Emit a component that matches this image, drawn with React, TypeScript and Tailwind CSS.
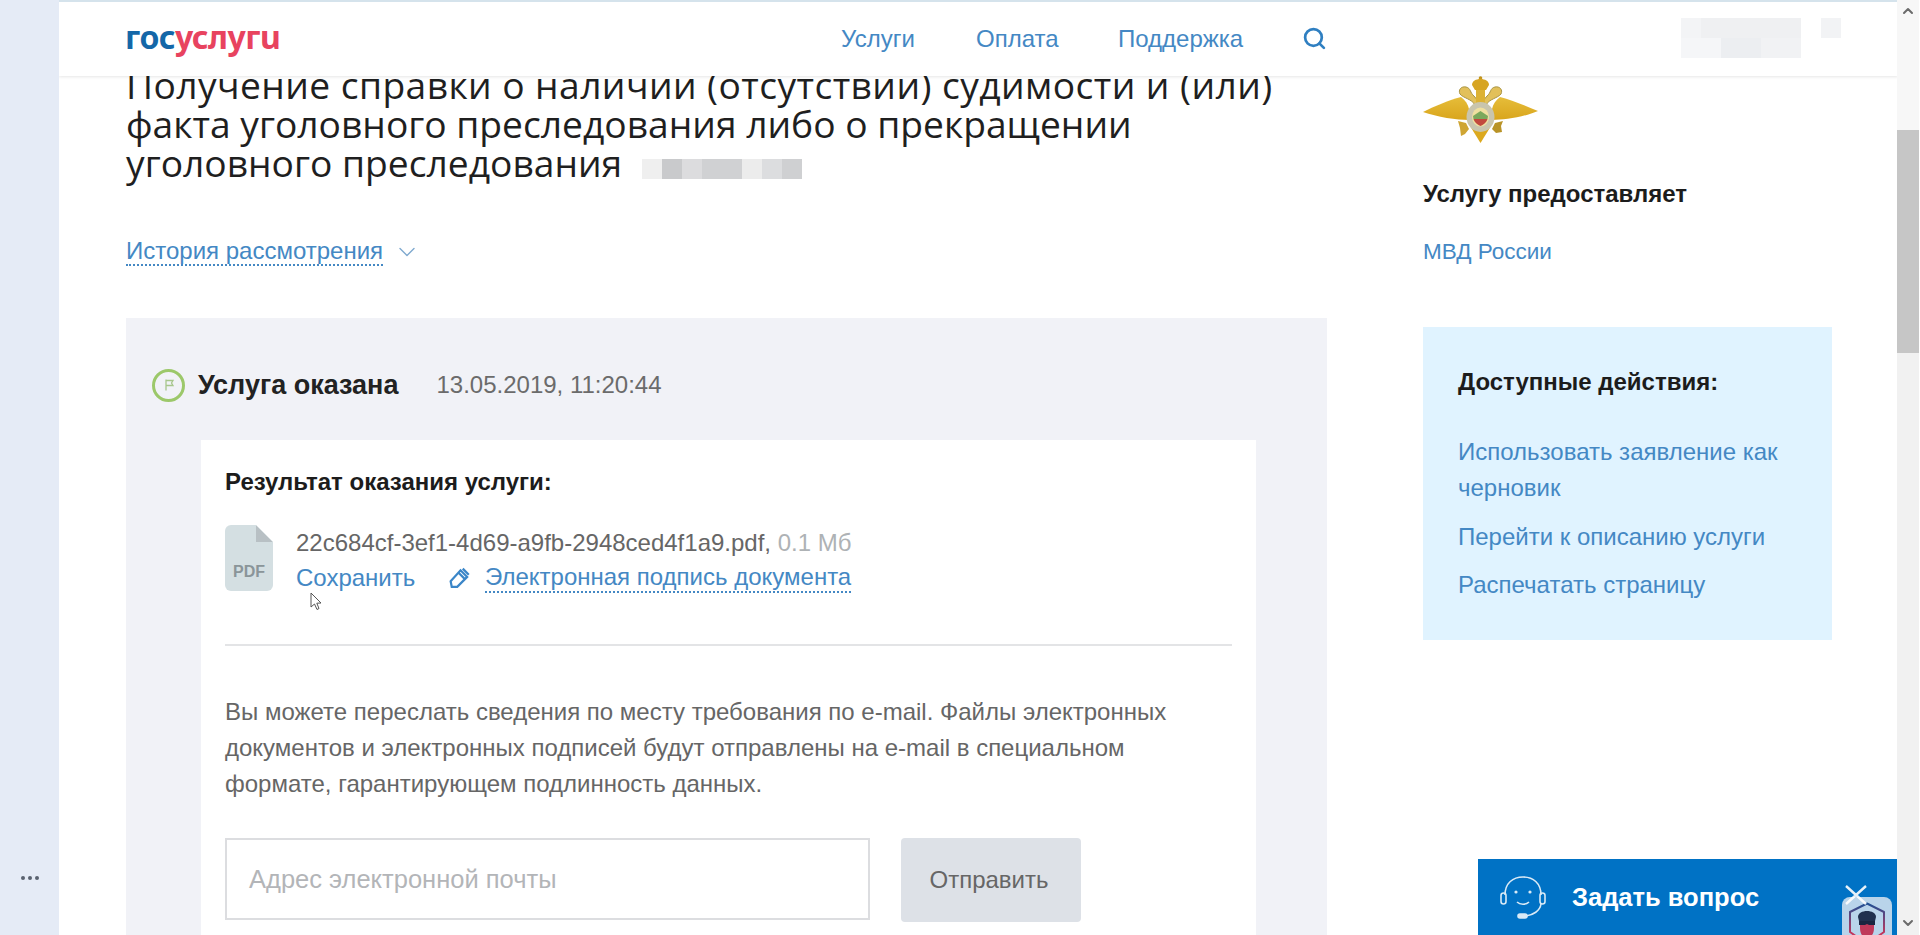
import { ChevronDown, ChevronUp, Search } from "lucide-react";

const sans = "font-['Liberation_Sans',Arial,sans-serif]";
const linkColor = "text-[#4488c4]";

const Eagle = () => (
  <svg viewBox="0 0 115 68" className="w-[115px] h-[68px]">
    <defs>
      <linearGradient id="wingFill" x1="0" y1="0" x2="0" y2="1">
        <stop offset="0" stopColor="#e6bd3a" />
        <stop offset="1" stopColor="#d9a51c" />
      </linearGradient>
    </defs>
    {/* wings */}
    <path d="M0 36 C12 30 26 24 38 21 C42 24 45 28 46 33 L46 44 C34 44 14 41 0 36Z" fill="url(#wingFill)" />
    <path d="M115 35 C103 30 89 24 77 21 C73 24 70 28 69 33 L69 44 C81 44 101 41 115 35Z" fill="url(#wingFill)" />
    {/* tail */}
    <path d="M57.5 67 L47 50 L68 50Z" fill="#dca91e" />
    {/* legs */}
    <path d="M35 45 L43 47 L46 53 L42 58 L38 60 L37 52Z" fill="#cfa533" />
    <path d="M80 45 L72 47 L69 53 L73 57 L79 56 L78 50Z" fill="#b99327" />
    {/* necks and heads */}
    <path d="M52 29 C49 23 40 22 37 18 C35 14 38 10 43 11 C48 12 47 17 51 20 L56 26Z" fill="#e2c05a" stroke="#a99546" strokeWidth="1" />
    <path d="M63 29 C66 23 75 22 78 18 C80 14 77 10 72 11 C67 12 68 17 64 20 L59 26Z" fill="#e2c05a" stroke="#a99546" strokeWidth="1" />
    {/* crown */}
    <circle cx="57.5" cy="2" r="1.8" fill="#c99a1f" />
    <path d="M49 9 C49 5 53 3 57.5 3 C62 3 66 5 66 9 L63 14 H52Z" fill="#d7a523" />
    <rect x="53" y="14" width="9" height="13" fill="#dcb235" />
    {/* shield */}
    <ellipse cx="57.5" cy="41" rx="14" ry="15" fill="#c9c5ad" />
    <ellipse cx="57.5" cy="41" rx="8.5" ry="9.5" fill="#efe0a0" />
    <path d="M50 40 L57.5 35 L65 40 L64.5 43 H50.5Z" fill="#7ba85c" />
    <path d="M50.5 43 H64.5 C63.5 46.5 60 49 57.5 50 C55 49 51.5 46.5 50.5 43Z" fill="#c2493d" />
  </svg>
);

const PdfIcon = () => (
  <div className="relative w-12 h-[66px] bg-[#d4dfe2] rounded-[6px] flex items-end justify-center pb-[11px] [clip-path:polygon(0_0,31px_0,100%_17px,100%_100%,0_100%)]">
    <span className="text-[#8a9599] text-[16px] leading-none font-bold">PDF</span>
    <div className="absolute top-0 right-0 w-[17px] h-[17px] bg-[#b8c0c4] [clip-path:polygon(0_0,100%_100%,0_100%)]" />
  </div>
);

const Cursor = () => (
  <svg viewBox="0 0 12 19" className="absolute left-[14px] top-[67px] w-3 h-[19px]">
    <path d="M1 1 V15 L4.5 12 L7 17.5 L9 16.5 L6.8 11.2 L11 11 Z" fill="#fff" stroke="#555" strokeWidth="1" />
  </svg>
);

const blurCells = ["bg-[#efefef]", "bg-[#c9cacc]", "bg-[#dcdcde]", "bg-[#d0d1d3]", "bg-[#d0d1d3]", "bg-[#ececec]", "bg-[#dcdddf]", "bg-[#cfd0d2]"];

const App = () => {
  return (
    <div className={`${sans} w-[1920px] h-[935px] overflow-hidden flex bg-white text-[#222]`}>
      {/* left strip */}
      <aside className="w-[59px] shrink-0 bg-[#e5ebf6] flex items-end justify-center pb-[55px]">
        <div className="flex gap-[3px]">
          <span className="w-1 h-1 rounded-full bg-[#5a6270]" />
          <span className="w-1 h-1 rounded-full bg-[#5a6270]" />
          <span className="w-1 h-1 rounded-full bg-[#5a6270]" />
        </div>
      </aside>

      {/* page */}
      <div className="relative w-[1839px] shrink-0 flex flex-col overflow-hidden">
        <header className="relative z-10 h-[76px] shrink-0 bg-white border-t-2 border-t-[#d5e3ec] shadow-[0_1px_3px_rgba(0,0,0,0.1)] pl-[66px] pr-[57px] flex items-center">
          <div className="w-[718px] font-['Noto_Sans',sans-serif] font-bold text-[32px] leading-none tracking-[-0.5px] -mt-[4px]">
            <span className="text-[#1467a8]">гос</span>
            <span className="text-[#e8435f]">услугu</span>
          </div>
          <nav className={`flex items-center text-[24px] -mt-[1px] ${linkColor}`}>
            <a className="w-[135px]">Услуги</a>
            <a className="w-[142px]">Оплата</a>
            <a className="w-[184px]">Поддержка</a>
            <Search size={25} strokeWidth={2.6} className="text-[#2f7fc1]" />
          </nav>
          <div className="ml-[354px] flex flex-col -mt-[3px]">
            <div className="flex">
              <div className="w-5 h-5 bg-[#f3f4f6]" />
              <div className="w-[100px] h-5 bg-[#eff0f2]" />
              <div className="w-5 h-5 bg-white" />
              <div className="w-5 h-5 bg-[#f2f3f5]" />
            </div>
            <div className="flex">
              <div className="w-10 h-5 bg-[#f5f6f8]" />
              <div className="w-10 h-5 bg-[#eceef1]" />
              <div className="w-10 h-5 bg-[#f1f2f4]" />
            </div>
          </div>
        </header>

        <div className="flex-1 flex pl-[67px] min-h-0">
          {/* main column */}
          <main className="w-[1201px] shrink-0">
            <h1 className="-mt-[11px] font-['Open_Sans',sans-serif] text-[37.2px] leading-[39px] text-[#1f1f1f]">
              <span className="tracking-[0.42px]">Получение справки о наличии (отсутствии) судимости и (или)</span>
              <br />
              факта уголовного преследования либо о прекращении
              <br />
              уголовного преследования
              <span className="inline-flex ml-[20px] align-[-2px]">
                {blurCells.map((cell, index) => (
                  <span key={index} className={`w-5 h-5 ${cell}`} />
                ))}
              </span>
            </h1>

            <div className="mt-[56px] flex items-center gap-[10px] text-[24px] h-7">
              <a className={`${linkColor} border-b-2 border-dotted border-[#4488c4] leading-[26px]`}>История рассмотрения</a>
              <ChevronDown size={28} strokeWidth={1.2} className="text-[#7fa9cf]" />
            </div>

            <section className="mt-[52px] h-[700px] bg-[#f1f2f7] pl-[75px] pr-[71px] pt-[50px]">
              <div className="relative -ml-[49px] flex items-center h-[34px]">
                <div className="w-[33px] h-[33px] rounded-full border-[3px] border-[#9cc86a] flex items-center justify-center">
                  <svg viewBox="0 0 14 14" className="w-[14px] h-[14px]">
                    <path d="M4 1.5 V12.5 M4 2.5 H11 L9.5 5 L11 7.5 H4" fill="none" stroke="#a7c68c" strokeWidth="1.3" />
                  </svg>
                </div>
                <span className="ml-[13px] font-bold text-[27px]">Услуга оказана</span>
                <span className="ml-[38px] text-[24px] text-[#6b6b6b]">13.05.2019, 11:20:44</span>
              </div>

              <div className="mt-[38px] h-[560px] bg-white px-[24px] pt-[28px]">
                <h2 className="font-bold text-[24px] leading-[28px] text-[#1c1c1c]">Результат оказания услуги:</h2>

                <div className="mt-[29px] flex gap-[23px]">
                  <PdfIcon />
                  <div className="relative">
                    <div className="text-[24px] leading-[36px] text-[#666]">
                      22c684cf-3ef1-4d69-a9fb-2948ced4f1a9.pdf,<span className="text-[#aeb2b5]"> 0.1 Мб</span>
                    </div>
                    <div className={`flex items-center text-[24px] leading-[33px] ${linkColor}`}>
                      <a className="w-[153px]">Сохранить</a>
                      <svg viewBox="2 1 19 20" className="w-[22px] h-[22px] mr-[14px]" fill="none" stroke="#3b86c8" strokeWidth="2">
                        <path d="M3 14 L12 4 L18 10 L9 19 H4 Z M10 6 L16 12 M14 2.5 L19.5 8" />
                      </svg>
                      <a className="border-b-2 border-dotted border-[#4488c4] leading-[28px]">Электронная подпись документа</a>
                    </div>
                    <Cursor />
                  </div>
                </div>

                <div className="mt-[50px] h-[2px] bg-[#e3e4e6]" />

                <p className="mt-[48px] text-[24px] leading-[36px] text-[#666]">
                  Вы можете переслать сведения по месту требования по e-mail. Файлы электронных
                  <br />
                  документов и электронных подписей будут отправлены на e-mail в специальном
                  <br />
                  формате, гарантирующем подлинность данных.
                </p>

                <div className="mt-[36px] flex gap-[31px]">
                  <div className="w-[645px] h-[82px] border-2 border-[#dcdde0] bg-white pl-[22px] flex items-center text-[25.5px] text-[#b3b5b8]">
                    Адрес электронной почты
                  </div>
                  <button className="w-[180px] h-[84px] pr-[4px] rounded-[4px] bg-[#dde1e7] text-[24px] text-[#666]">Отправить</button>
                </div>
              </div>
            </section>
          </main>

          {/* right column */}
          <aside className="ml-[96px] w-[409px] shrink-0">
            <Eagle />
            <h3 className="mt-[37px] font-bold text-[24px] leading-[26px] text-[#1c1c1c]">Услугу предоставляет</h3>
            <a className={`block mt-[32px] text-[22.5px] leading-[26px] ${linkColor}`}>МВД России</a>
            <div className="mt-[62px] h-[313px] bg-[#e0f3ff] pl-[35px] pr-[40px] pt-[41px]">
              <h4 className="font-bold text-[24px] leading-[28px] text-[#1c1c1c]">Доступные действия:</h4>
              <ul className={`mt-[38px] text-[24px] leading-[36px] ${linkColor}`}>
                <li>Использовать заявление как черновик</li>
                <li className="mt-[13px]">Перейти к описанию услуги</li>
                <li className="mt-[12px]">Распечатать страницу</li>
              </ul>
            </div>
          </aside>
        </div>

        {/* chat widget */}
        <div className="absolute right-[1px] bottom-0 w-[419px] h-[76px] bg-[#0072c5] flex items-center pl-[22px] text-white z-20">
          <svg viewBox="0 0 46 44" className="w-[46px] h-[44px]" fill="none" stroke="#fff" strokeWidth="1.6" opacity="0.85">
            <path d="M5 20 C5 8 13 2 23 2 C33 2 41 8 41 20" />
            <rect x="1" y="18" width="5" height="11" rx="2.5" />
            <rect x="40" y="18" width="5" height="11" rx="2.5" />
            <path d="M41 29 C40 36 33 40 26 41" />
            <rect x="18" y="39" width="9" height="4" rx="2" fill="#fff" />
            <path d="M17 27 C20 30 26 30 29 27" />
            <circle cx="16" cy="17" r="1.6" fill="#fff" stroke="none" />
            <circle cx="30" cy="17" r="1.6" fill="#fff" stroke="none" />
          </svg>
          <span className="ml-[26px] font-bold text-[25.5px]">Задать вопрос</span>
          <div className="absolute left-[364px] top-[38px] w-[50px] h-[50px] rounded-[8px] bg-[#b9d4ea] flex items-start justify-center pt-[5px]">
            <svg viewBox="0 0 40 44" className="w-10 h-11">
              <defs>
                <linearGradient id="badgeLine" x1="0" y1="0" x2="0" y2="1">
                  <stop offset="0" stopColor="#1f4f93" />
                  <stop offset="0.75" stopColor="#c4365c" />
                </linearGradient>
              </defs>
              <path d="M20 1.5 L37 10 V30 L20 42 L3 30 V10Z" fill="none" stroke="url(#badgeLine)" strokeWidth="2" strokeLinejoin="round" />
              <path d="M11 15 C11 7 29 7 29 15 L28 19 H12Z" fill="#20304e" />
              <path d="M13 19 H27 V26 C27 33 23 36 20 36 C17 36 13 33 13 26Z" fill="#c0395a" />
              <path d="M12 19 H28 V23 H22 L20 22 L18 23 H12Z" fill="#1a2540" />
            </svg>
          </div>
          <svg viewBox="0 0 22 20" className="absolute left-[367px] top-[26px] w-[22px] h-5" stroke="#fff" strokeWidth="2.4" opacity="0.9">
            <path d="M1 1 L21 19 M21 1 L1 19" />
          </svg>
        </div>
      </div>

      {/* scrollbar */}
      <div className="w-[22px] shrink-0 -ml-[1px] relative z-30 bg-[#f1f1f1] flex flex-col items-center justify-between">
        <div className="w-full h-[353px] flex flex-col">
          <div className="h-[130px] bg-[#f7f7f7] flex justify-center pt-[3px]">
            <ChevronUp size={16} strokeWidth={3} className="text-[#6b6b6b]" />
          </div>
          <div className="flex-1 bg-[#c6c6c6]" />
        </div>
        <ChevronDown size={16} strokeWidth={3} className="text-[#6b6b6b] mb-1" />
      </div>
    </div>
  );
};

export default App;
